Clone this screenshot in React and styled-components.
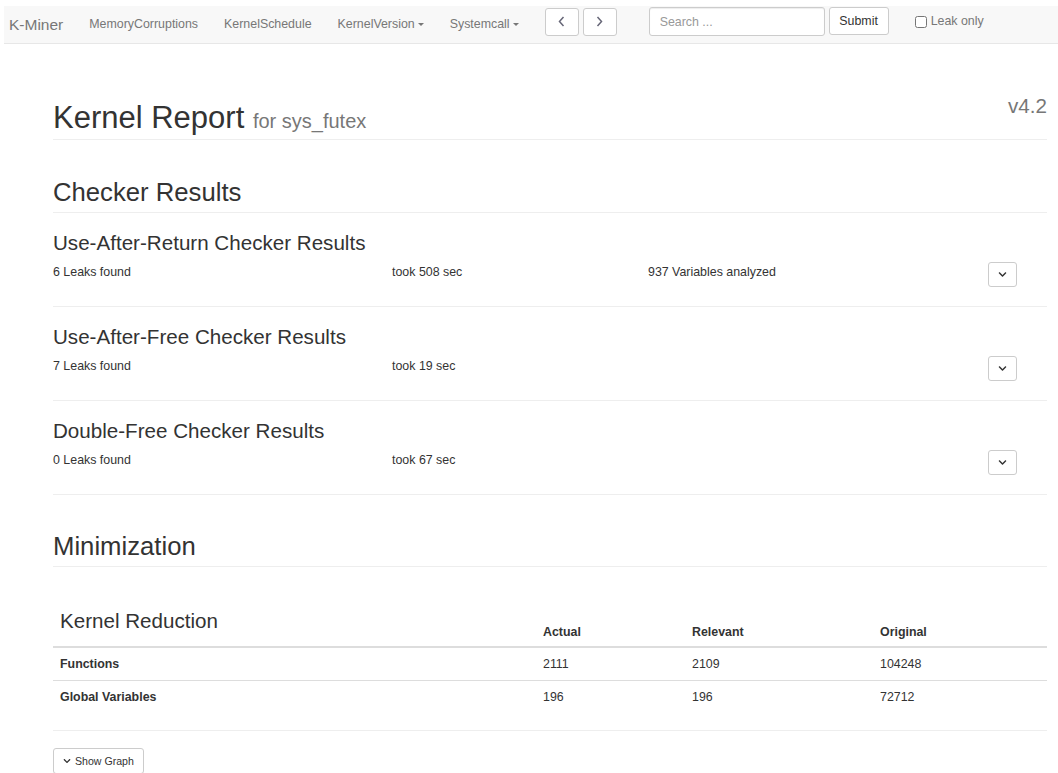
import React from 'react';
import styled, { createGlobalStyle } from 'styled-components';
import { FaChevronDown } from 'react-icons/fa';

const GlobalStyle = createGlobalStyle`
  body {
    margin: 0;
    background: #fff;
    color: #333;
    font-family: "Liberation Sans", Arial, Helvetica, sans-serif;
    font-size: 12.4px;
    line-height: 17px;
  }
  * { box-sizing: border-box; }
`;

const checkers = [
  { title: 'Use-After-Return Checker Results', leaks: 6, time: 508, vars: 937 },
  { title: 'Use-After-Free Checker Results', leaks: 7, time: 19 },
  { title: 'Double-Free Checker Results', leaks: 0, time: 67 },
];

const reduction = [
  { name: 'Functions', actual: 2111, relevant: 2109, original: 104248 },
  { name: 'Global Variables', actual: 196, relevant: 196, original: 72712 },
];

const Navbar = styled.nav`
  margin: 6px 0 0 4px;
  height: 38px;
  background: #f8f8f8;
  border-bottom: 1px solid #e7e7e7;
  display: flex;
  align-items: center;
`;

const Brand = styled.a`
  padding: 0 13px 1px 5px;
  font-size: 15.5px;
  color: #777;
`;

const NavLink = styled.a`
  padding: 0 13px 1px;
  color: #777;
  display: flex;
  align-items: center;
  white-space: nowrap;
`;

const Caret = styled.span`
  display: inline-block;
  margin-left: 3px;
  border-top: 3.5px solid #777;
  border-left: 3.5px solid transparent;
  border-right: 3.5px solid transparent;
`;

const NavGroup = styled.div`
  display: flex;
  gap: 4px;
  margin: -6px 0 0 ${(p) => p.$offset}px;
`;

const NavButton = styled.button`
  height: 28px;
  width: ${(p) => p.$w || 34}px;
  background: #fff;
  border: 1px solid #ccc;
  border-radius: 3px;
  display: flex;
  align-items: center;
  justify-content: center;
  font: inherit;
  color: #333;
  padding: 0;
`;

const SearchInput = styled.input`
  width: 176px;
  height: 29px;
  border: 1px solid #ccc;
  border-radius: 3px;
  padding: 0 10px;
  font: inherit;
  color: #555;
  box-shadow: inset 0 1px 1px rgba(0, 0, 0, 0.075);
  &::placeholder { color: #999; }
`;

const CheckLabel = styled.label`
  display: flex;
  align-items: center;
  gap: 4px;
  margin: -6px 0 0 26px;
  color: #777;
  input { margin: 0; width: 12px; height: 12px; }
`;

const Main = styled.main`
  padding: 0 11px 0 53px;
`;

const PageHeader = styled.header`
  margin-top: 57px;
  padding-bottom: 1px;
  border-bottom: 1px solid #eee;
  display: flex;
  justify-content: space-between;
  align-items: flex-start;
`;

const Title = styled.h1`
  margin: 0;
  font-size: 31px;
  line-height: 34px;
  font-weight: 500;
  small {
    font-size: 20px;
    color: #777;
    font-weight: 400;
  }
`;

const Version = styled.span`
  margin-top: -7px;
  font-size: 20.6px;
  line-height: 23px;
  color: #777;
`;

const SectionTitle = styled.h2`
  margin: ${(p) => p.$top}px 0 0;
  padding-bottom: 6px;
  border-bottom: 1px solid #eee;
  font-size: 25.7px;
  line-height: 28px;
  font-weight: 500;
`;

const Checker = styled.section`
  padding: 18px 0 19px;
  border-bottom: 1px solid #eee;
`;

const CheckerTitle = styled.h3`
  margin: 0 0 7px;
  font-size: 20.6px;
  line-height: 23px;
  font-weight: 500;
`;

const CheckerRow = styled.div`
  display: grid;
  grid-template-columns: 339px 256px 340px 1fr;
  align-items: start;
  span { padding-top: 3px; }
`;

const IconButton = styled.button`
  width: 29px;
  height: 25px;
  margin-top: 1px;
  background: #fff;
  border: 1px solid #ccc;
  border-radius: 3px;
  display: flex;
  align-items: center;
  justify-content: center;
  padding: 0;
  color: #333;
`;

const Table = styled.table`
  width: 100%;
  margin: 35px 0 17px;
  border-collapse: collapse;
  table-layout: fixed;
  th, td {
    padding: 8px 7px 7px;
    text-align: left;
    vertical-align: bottom;
  }
  th {
    padding: 7px 7px 5px;
    border-bottom: 2px solid #ddd;
  }
  td { border-top: 1px solid #ddd; }
  tr:first-child td { border-top: 0; }
`;

const TableTitle = styled.h3`
  margin: 0 0 9px;
  font-size: 20.6px;
  line-height: 23px;
  font-weight: 500;
`;

const Divider = styled.hr`
  margin: 0 0 17px;
  border: 0;
  border-top: 1px solid #eee;
`;

const SmallButton = styled.button`
  height: 26px;
  padding: 0 9px;
  background: #fff;
  border: 1px solid #ccc;
  border-radius: 3px;
  font: inherit;
  font-size: 10.6px;
  color: #333;
  display: flex;
  align-items: center;
  gap: 4px;
`;

const Chevron = ({ dir }) => (
  <svg width="9" height="13" viewBox="0 0 9 13">
    <polyline
      points={dir === 'left' ? '6.5,2 2.5,6.5 6.5,11' : '2.5,2 6.5,6.5 2.5,11'}
      fill="none"
      stroke="#667"
      strokeWidth="1.5"
    />
  </svg>
);

export default function App() {
  return (
    <>
      <GlobalStyle />
      <Navbar>
        <Brand>K-Miner</Brand>
        <NavLink>MemoryCorruptions</NavLink>
        <NavLink>KernelSchedule</NavLink>
        <NavLink>
          KernelVersion
          <Caret />
        </NavLink>
        <NavLink>
          Systemcall
          <Caret />
        </NavLink>
        <NavGroup $offset={13}>
          <NavButton>
            <Chevron dir="left" />
          </NavButton>
          <NavButton>
            <Chevron dir="right" />
          </NavButton>
        </NavGroup>
        <NavGroup $offset={32}>
          <SearchInput placeholder="Search ..." />
          <NavButton $w={60}>Submit</NavButton>
        </NavGroup>
        <CheckLabel>
          <input type="checkbox" />
          Leak only
        </CheckLabel>
      </Navbar>

      <Main>
        <PageHeader>
          <Title>
            Kernel Report <small>for sys_futex</small>
          </Title>
          <Version>v4.2</Version>
        </PageHeader>

        <SectionTitle $top={38}>Checker Results</SectionTitle>
        {checkers.map((c) => (
          <Checker key={c.title}>
            <CheckerTitle>{c.title}</CheckerTitle>
            <CheckerRow>
              <span>{c.leaks} Leaks found</span>
              <span>took {c.time} sec</span>
              <span>{c.vars ? `${c.vars} Variables analyzed` : ''}</span>
              <IconButton>
                <FaChevronDown size={9} />
              </IconButton>
            </CheckerRow>
          </Checker>
        ))}

        <SectionTitle $top={37}>Minimization</SectionTitle>
        <Table>
          <colgroup>
            <col style={{ width: 483 }} />
            <col style={{ width: 149 }} />
            <col style={{ width: 188 }} />
            <col />
          </colgroup>
          <thead>
            <tr>
              <th>
                <TableTitle>Kernel Reduction</TableTitle>
              </th>
              <th>Actual</th>
              <th>Relevant</th>
              <th>Original</th>
            </tr>
          </thead>
          <tbody>
            {reduction.map((r) => (
              <tr key={r.name}>
                <td>
                  <b>{r.name}</b>
                </td>
                <td>{r.actual}</td>
                <td>{r.relevant}</td>
                <td>{r.original}</td>
              </tr>
            ))}
          </tbody>
        </Table>
        <Divider />
        <SmallButton>
          <FaChevronDown size={8} />
          Show Graph
        </SmallButton>
      </Main>
    </>
  );
}
